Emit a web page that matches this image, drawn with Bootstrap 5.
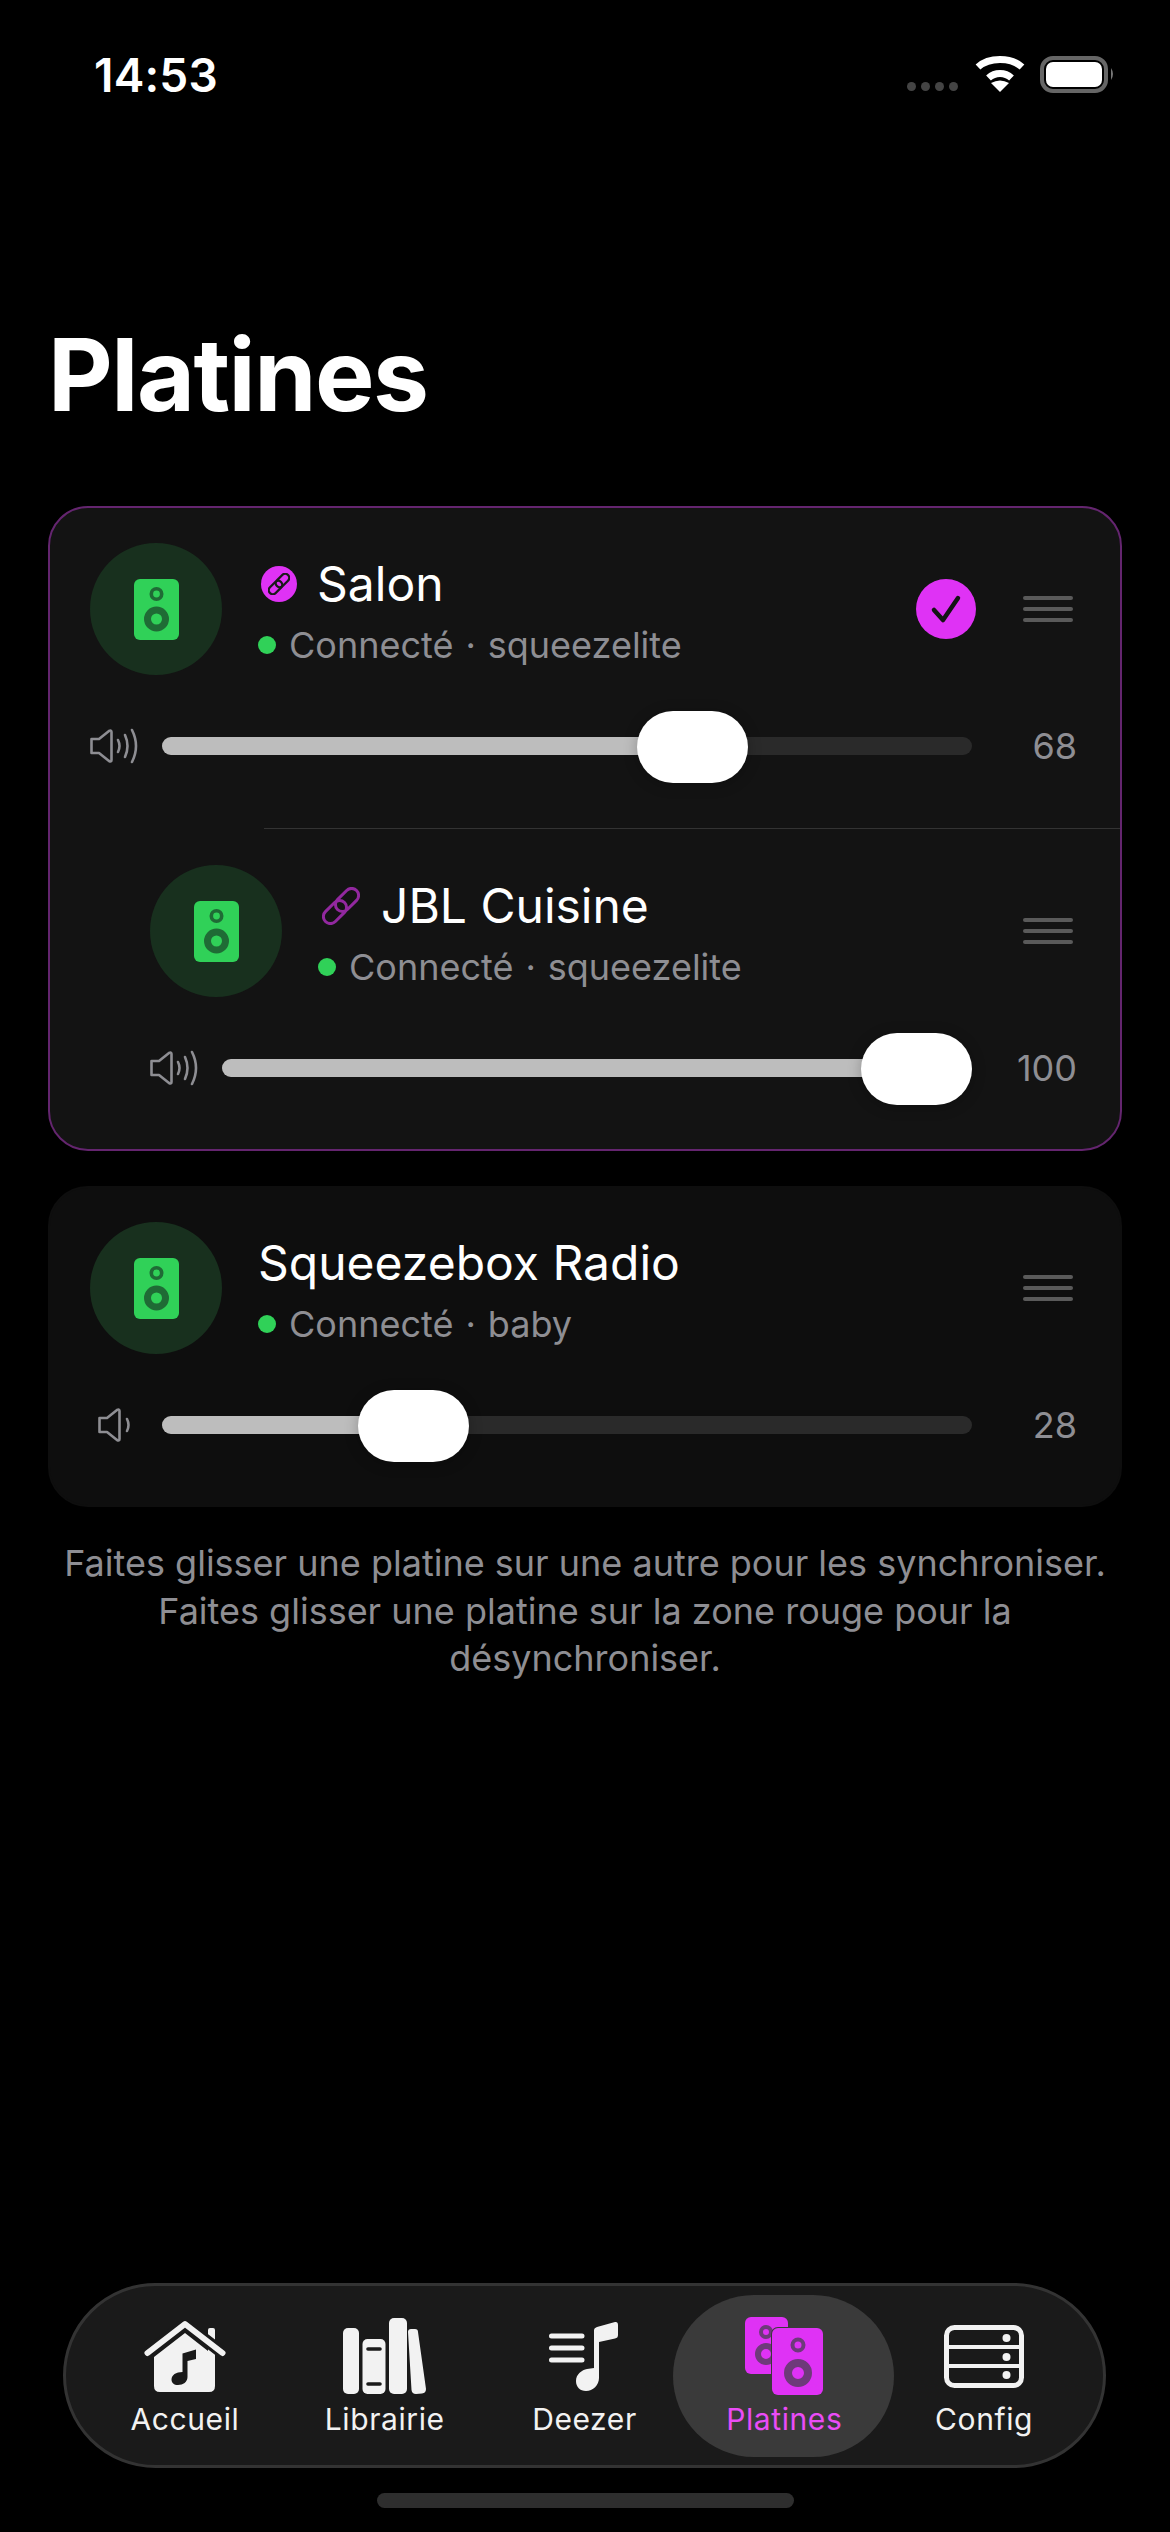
<!DOCTYPE html>
<html lang="fr">

<head>
    <meta charset="UTF-8">
    <title>Platines</title>
    <link href="https://cdn.jsdelivr.net/npm/bootstrap@5.3.3/dist/css/bootstrap.min.css" rel="stylesheet">
    <style>
        html, body { background: #000; }
        body { font-family: Inter, "Liberation Sans", sans-serif; color: #fff; width: 1170px; height: 2532px; overflow: hidden; }
        .ecran { height: 2532px; }
        .barre-statut { height: 100px; padding: 47px 55px 0 94px; }
        .heure { font-size: 46px; line-height: 56px; font-weight: 600; letter-spacing: .2px; }
        .reseau { height: 38px; margin-top: 9px; flex: none; }
        .titre { font-size: 100px; line-height: 120px; font-weight: 700; margin: 215px 0 0; padding-left: 48px; letter-spacing: -1.5px; }
        .liste { padding: 0 48px; margin-top: 71px; }
        .bloc { border-radius: 40px; }
        .bloc-groupe { background: #131313; border: 2px solid #64256f; }
        .bloc-seul { background: #0e0e0e; border: 2px solid #0e0e0e; margin-top: 35px; }
        .platine { padding: 35px 43px 45px 40px; }
        .bloc-seul .platine { padding-top: 34px; padding-bottom: 43px; }
        .platine-liee { padding: 36px 43px 44px 100px; }
        .filet { margin-left: 214px; border-top: 1px solid #333; }
        .avatar { width: 132px; height: 132px; background: #18301e; border-radius: 50%; flex: none; }
        .infos { margin-left: 36px; }
        .nom { font-size: 48px; line-height: 58px; font-weight: 400; }
        .etat { font-size: 36px; line-height: 42px; color: #8e8e93; margin: 11px 0 -3px; }
        .pastille { width: 18px; height: 18px; border-radius: 50%; background: #30d158; margin-right: 13px; }
        .sep { margin: 0 12px; }
        .rond-lien { width: 36px; height: 36px; border-radius: 50%; background: #df32f5; margin: 0 20px 0 3px; }
        .lien-seul { margin: 0 21px 0 4px; }
        .coche { width: 60px; height: 60px; border-radius: 50%; background: #df32f5; margin-right: 47px; }
        .poignee { width: 50px; flex: none; margin-right: 4px; }
        .poignee i { display: block; height: 4px; background: #5a5a5a; border-radius: 2px; margin: 7px 0; }
        .ligne-volume { margin-top: 36px; height: 72px; }
        .ico-vol { width: 48px; flex: none; margin-right: 24px; margin-top: -3px; }
        .glissiere { height: 72px; }
        .glissiere .progress { height: 18px; background: #2a2a2a; border-radius: 9px; margin-top: -3px; }
        .glissiere .progress-bar { background: #bdbdbd; }
        .curseur { position: absolute; top: 0; width: 111px; height: 72px; background: #fff; border-radius: 36px; box-shadow: 0 2px 14px rgba(0, 0, 0, .25); }
        .valeur { width: 105px; flex: none; text-align: right; font-size: 36px; color: #8e8e93; margin-top: -3px; }
        .aide { font-size: 36px; line-height: 47.5px; color: #8e8e93; text-align: center; margin: 33px 0 0; padding: 0 14px; }
        .onglets { margin: 0 64px 0 63px; height: 185px; background: #1a1a1a; border: 3px solid #333; border-radius: 93px; padding: 0 19px; }
        .onglet { width: 200px; height: 100%; position: relative; padding-top: 30px; color: #f2f2f2; }
        .onglet-actif { color: #ea4cf7; }
        .onglet-actif::before { content: ""; position: absolute; left: -11px; right: -10px; top: 9px; height: 162px; background: #3a3a3a; border-radius: 81px; }
        .ico-onglet { height: 80px; position: relative; }
        .libelle { font-size: 30px; line-height: 40px; font-weight: 400; position: relative; letter-spacing: .6px; margin-top: 3px; }
        .indicateur { width: 417px; height: 15px; border-radius: 8px; background: #2e2e2e; margin: 25px auto 24px; }
    </style>
</head>

<body>
    <svg width="0" height="0" class="position-absolute">
        <defs>
            <symbol id="enceinte" viewBox="0 0 45 61">
                <rect width="45" height="61" rx="6" fill="#30d158" />
                <circle cx="22.5" cy="15" r="5.2" fill="none" stroke="#1f6b35" stroke-width="3.6" />
                <circle cx="22.5" cy="40" r="9" fill="none" stroke="#1f6b35" stroke-width="7" />
            </symbol>
            <symbol id="maillons" viewBox="0 0 38 38">
                <g fill="none" transform="rotate(-45 19 19)">
                    <rect x="-3" y="12" width="27" height="14" rx="7" />
                    <rect x="14" y="12" width="27" height="14" rx="7" />
                </g>
            </symbol>
        </defs>
    </svg>

    <div class="ecran d-flex flex-column">
        <div class="barre-statut d-flex justify-content-between align-items-start">
            <div class="heure">14:53</div>
            <svg class="reseau" width="208" height="38" viewBox="0 0 208 38">
                <g fill="#444">
                    <circle cx="4.5" cy="30.5" r="4.5" />
                    <circle cx="18.5" cy="30.5" r="4.5" />
                    <circle cx="32.5" cy="30.5" r="4.5" />
                    <circle cx="46.5" cy="30.5" r="4.5" />
                </g>
                <g fill="none" stroke="#fff" stroke-width="7">
                    <path d="M71 11 C82 1 104 1 115 11" />
                    <path d="M81.500 22 C88 16 98 16 104.500 22" />
                </g>
                <path d="M84 27 Q93 22 102 27 L93 36 Z" fill="#fff" />
                <rect x="135" y="2" width="64" height="33" rx="11" fill="none" stroke="#666" stroke-width="4" />
                <rect x="139" y="6" width="56" height="25" rx="7" fill="#fff" />
                <path d="M204 12 Q208 18 204 24 Z" fill="#777" />
            </svg>
        </div>

        <h1 class="titre">Platines</h1>

        <div class="liste">
            <div class="bloc bloc-groupe">
                <div class="platine">
                    <div class="d-flex align-items-center">
                        <div class="avatar d-flex align-items-center justify-content-center"><svg width="45" height="61"><use href="#enceinte" /></svg></div>
                        <div class="infos flex-grow-1">
                            <div class="nom d-flex align-items-center">
                                <span class="rond-lien d-flex align-items-center justify-content-center"><svg width="22" height="22"><use href="#maillons" stroke="#1a1a1a" stroke-width="4" /></svg></span>Salon
                            </div>
                            <div class="etat d-flex align-items-center"><span class="pastille"></span>Connecté<span class="sep">·</span>squeezelite</div>
                        </div>
                        <div class="coche d-flex align-items-center justify-content-center">
                            <svg width="32" height="32" viewBox="0 0 32 32"><path d="M4 17 L13 27 L28 5" fill="none" stroke="#141414" stroke-width="4.500" stroke-linecap="round" stroke-linejoin="round" /></svg>
                        </div>
                        <div class="poignee"><i></i><i></i><i></i></div>
                    </div>
                    <div class="ligne-volume d-flex align-items-center">
                        <svg class="ico-vol" width="48" height="36" viewBox="0 0 48 36" fill="none" stroke="#8e8e93" stroke-width="2.600" stroke-linecap="round" stroke-linejoin="round">
                            <path d="M1.500 11 H9 L19 3 Q21.500 1.800 21.500 4 V32 Q21.500 34.200 19 33 L9 25 H1.500 Z" />
                            <path d="M28 12 Q31 18 28 24" />
                            <path d="M35 7 Q40 18 35 29" />
                            <path d="M42 2 Q50 18 42 34" />
                        </svg>
                        <div class="glissiere flex-grow-1 position-relative d-flex align-items-center">
                            <div class="progress w-100"><div class="progress-bar" style="width: 65%"></div></div>
                            <div class="curseur" style="left: calc((100% - 111px) * .68)"></div>
                        </div>
                        <div class="valeur">68</div>
                    </div>
                </div>
                <div class="filet"></div>
                <div class="platine-liee">
                    <div class="d-flex align-items-center">
                        <div class="avatar d-flex align-items-center justify-content-center"><svg width="45" height="61"><use href="#enceinte" /></svg></div>
                        <div class="infos flex-grow-1">
                            <div class="nom d-flex align-items-center">
                                <svg class="lien-seul" width="38" height="38"><use href="#maillons" stroke="#92289f" stroke-width="3" /></svg>JBL Cuisine
                            </div>
                            <div class="etat d-flex align-items-center"><span class="pastille"></span>Connecté<span class="sep">·</span>squeezelite</div>
                        </div>
                        <div class="poignee"><i></i><i></i><i></i></div>
                    </div>
                    <div class="ligne-volume d-flex align-items-center">
                        <svg class="ico-vol" width="48" height="36" viewBox="0 0 48 36" fill="none" stroke="#8e8e93" stroke-width="2.600" stroke-linecap="round" stroke-linejoin="round">
                            <path d="M1.500 11 H9 L19 3 Q21.500 1.800 21.500 4 V32 Q21.500 34.200 19 33 L9 25 H1.500 Z" />
                            <path d="M28 12 Q31 18 28 24" />
                            <path d="M35 7 Q40 18 35 29" />
                            <path d="M42 2 Q50 18 42 34" />
                        </svg>
                        <div class="glissiere flex-grow-1 position-relative d-flex align-items-center">
                            <div class="progress w-100"><div class="progress-bar" style="width: 95%"></div></div>
                            <div class="curseur" style="left: calc(100% - 111px)"></div>
                        </div>
                        <div class="valeur">100</div>
                    </div>
                </div>
            </div>

            <div class="bloc bloc-seul">
                <div class="platine">
                    <div class="d-flex align-items-center">
                        <div class="avatar d-flex align-items-center justify-content-center"><svg width="45" height="61"><use href="#enceinte" /></svg></div>
                        <div class="infos flex-grow-1">
                            <div class="nom">Squeezebox Radio</div>
                            <div class="etat d-flex align-items-center"><span class="pastille"></span>Connecté<span class="sep">·</span>baby</div>
                        </div>
                        <div class="poignee"><i></i><i></i><i></i></div>
                    </div>
                    <div class="ligne-volume d-flex align-items-center">
                        <svg class="ico-vol" width="48" height="36" viewBox="0 0 48 36" fill="none" stroke="#8e8e93" stroke-width="2.600" stroke-linecap="round" stroke-linejoin="round">
                            <path d="M9.500 11 H17 L27 3 Q29.500 1.800 29.500 4 V32 Q29.500 34.200 27 33 L17 25 H9.500 Z" />
                            <path d="M37 12 Q40 18 37 24" />
                        </svg>
                        <div class="glissiere flex-grow-1 position-relative d-flex align-items-center">
                            <div class="progress w-100"><div class="progress-bar" style="width: 28%"></div></div>
                            <div class="curseur" style="left: calc((100% - 111px) * .28)"></div>
                        </div>
                        <div class="valeur">28</div>
                    </div>
                </div>
            </div>

            <p class="aide">Faites glisser une platine sur une autre pour les synchroniser.<br>Faites glisser une platine sur la zone rouge pour la désynchroniser.</p>
        </div>

        <div class="mt-auto">
            <div class="onglets d-flex">
                <div class="onglet d-flex flex-column align-items-center">
                    <div class="ico-onglet d-flex align-items-center">
                        <svg width="82" height="72" viewBox="0 0 82 72">
                            <path d="M10 37 L41 13 L64 31 V10 Q64 8 66 8 H69 Q71 8 71 10 V37 V66 Q71 72 65 72 H16 Q10 72 10 66 Z" fill="#f2f2f2" />
                            <path d="M3.500 33 L41 4 L78.500 33" fill="none" stroke="#1a1a1a" stroke-width="12" stroke-linecap="round" stroke-linejoin="round" />
                            <path d="M3.500 33 L41 4 L78.500 33" fill="none" stroke="#f2f2f2" stroke-width="6" stroke-linecap="round" stroke-linejoin="round" />
                            <path d="M38.500 33.500 L52 29.500 V39 L43.500 41 V57 C43.500 62 39 65 34 65 C30 65 27.500 63 27.500 59.500 C27.500 55 32 52 38.500 52 Z" fill="#1a1a1a" />
                        </svg>
                    </div>
                    <div class="libelle">Accueil</div>
                </div>
                <div class="onglet d-flex flex-column align-items-center">
                    <div class="ico-onglet d-flex align-items-center">
                        <svg width="83" height="76" viewBox="0 0 83 76" fill="#f2f2f2">
                            <rect x="0" y="10" width="16" height="66" rx="5" />
                            <rect x="19.500" y="21" width="23" height="55" rx="5" />
                            <rect x="46" y="0" width="18" height="76" rx="5" />
                            <path d="M65 14 Q65 11 68 11 H72 Q75 11 75 14 L83 71 Q83 75 79 75.500 L73 76 Q69 76 68.500 72 Z" />
                            <path d="M25 31 H37 M25 66 H37" stroke="#1a1a1a" stroke-width="3.600" stroke-linecap="round" />
                        </svg>
                    </div>
                    <div class="libelle">Librairie</div>
                </div>
                <div class="onglet d-flex flex-column align-items-center">
                    <div class="ico-onglet d-flex align-items-center">
                        <svg width="70" height="72" viewBox="0 0 70 72" fill="#f2f2f2">
                            <path d="M2.500 16 H33 M2.500 28 H33 M2.500 40 H33" stroke="#f2f2f2" stroke-width="5" stroke-linecap="round" />
                            <path d="M45 10 Q45 8 48 7 L66 2 Q69 1.500 69 5 V15 Q69 18 66 18.500 L50 22 V58 C50 65 44 71 37 71 C31 71 27 67 27 61 C27 54 33 50 38 49 L45 48 Z" />
                        </svg>
                    </div>
                    <div class="libelle">Deezer</div>
                </div>
                <div class="onglet onglet-actif d-flex flex-column align-items-center">
                    <div class="ico-onglet d-flex align-items-center">
                        <svg width="78" height="78" viewBox="0 0 78 78">
                            <rect width="43" height="57" rx="6" fill="#df32f5" />
                            <circle cx="21" cy="15" r="5" fill="none" stroke="#6e3a7a" stroke-width="4" />
                            <circle cx="21" cy="37" r="8" fill="none" stroke="#6e3a7a" stroke-width="6" />
                            <rect x="26" y="10" width="53" height="69" rx="7" fill="#3a3a3a" />
                            <rect x="27" y="11" width="51" height="67" rx="6" fill="#df32f5" />
                            <circle cx="53" cy="28" r="5.500" fill="none" stroke="#6e3a7a" stroke-width="4" />
                            <circle cx="53" cy="56" r="10" fill="none" stroke="#6e3a7a" stroke-width="8" />
                        </svg>
                    </div>
                    <div class="libelle">Platines</div>
                </div>
                <div class="onglet d-flex flex-column align-items-center">
                    <div class="ico-onglet d-flex align-items-center">
                        <svg width="80" height="63" viewBox="0 0 80 63">
                            <rect x="2.500" y="2.500" width="75" height="58" rx="8" fill="none" stroke="#f2f2f2" stroke-width="5" />
                            <path d="M3 22 H77 M3 41 H77" stroke="#f2f2f2" stroke-width="4" />
                            <circle cx="62.500" cy="13" r="4" fill="#f2f2f2" />
                            <circle cx="62.500" cy="32" r="4" fill="#f2f2f2" />
                            <circle cx="62.500" cy="50" r="4" fill="#f2f2f2" />
                        </svg>
                    </div>
                    <div class="libelle">Config</div>
                </div>
            </div>
            <div class="indicateur"></div>
        </div>
    </div>
    <script src="https://cdn.jsdelivr.net/npm/bootstrap@5.3.3/dist/js/bootstrap.bundle.min.js"></script>
</body>

</html>
